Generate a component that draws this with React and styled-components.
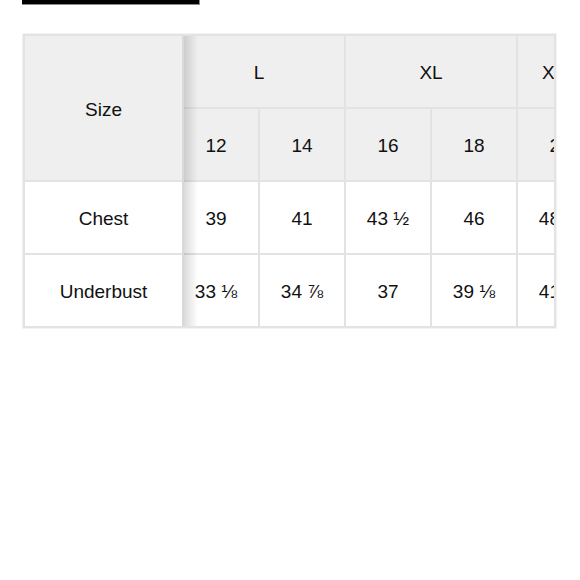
import React from 'react';
import styled, { createGlobalStyle } from 'styled-components';

const GlobalStyle = createGlobalStyle`
  body {
    margin: 0;
    background: #fff;
    font-family: "Liberation Sans", Arial, sans-serif;
  }
`;

const Page = styled.div`
  width: 580px;
  height: 580px;
  padding-left: 22px;
  box-sizing: border-box;
`;

const BlackBar = styled.div`
  width: 177px;
  height: 4px;
  background: #000;
  border-right: 1px solid #8a8a8a;
  border-bottom: 1px solid #8a8a8a;
`;

const Table = styled.div`
  margin-top: 28px;
  width: 535px;
  box-sizing: border-box;
  display: flex;
  border: 1px solid #f3f3f3;
  padding: 2px;
  background: #e3e3e3;
  overflow: hidden;
`;

const StickyCol = styled.div`
  flex: 0 0 157px;
  display: grid;
  grid-template-rows: 144px 71px 71px;
  row-gap: 2px;
  border-right: 2px solid #d9d9d9;
`;

const Scroller = styled.div`
  position: relative;
  flex: 1;
  overflow: hidden;

  &::before {
    content: '';
    position: absolute;
    left: 0;
    top: 0;
    bottom: 0;
    width: 14px;
    background: linear-gradient(to right, rgba(0, 0, 0, 0.14), rgba(0, 0, 0, 0));
    z-index: 1;
  }
`;

const Grid = styled.div`
  display: grid;
  grid-template-columns: repeat(6, 84px);
  grid-template-rows: repeat(4, 71px);
  gap: 2px;
  margin-left: -10px;
  width: max-content;
`;

const Cell = styled.div`
  display: flex;
  align-items: center;
  justify-content: center;
  padding-top: 3px;
  box-sizing: border-box;
  background: ${(p) => (p.$head ? '#efefef' : '#fff')};
  color: #111;
  font-size: 19px;
  white-space: nowrap;
  grid-column: ${(p) => (p.$span ? `span ${p.$span}` : 'auto')};
`;

const groups = [
  { label: 'L', span: 2 },
  { label: 'XL', span: 2 },
  { label: 'XXL', span: 1 },
  { label: '1X', span: 1 },
];
const sizes = ['12', '14', '16', '18', '20', '22'];
const rows = [
  { label: 'Chest', values: ['39', '41', '43 ½', '46', '48 ½', '51'] },
  { label: 'Underbust', values: ['33 ⅛', '34 ⅞', '37', '39 ⅛', '41 ⅜', '43 ⅝'] },
];

const App = () => (
  <Page>
    <GlobalStyle />
    <BlackBar />
    <Table>
      <StickyCol>
        <Cell $head>Size</Cell>
        {rows.map((r) => (
          <Cell key={r.label}>{r.label}</Cell>
        ))}
      </StickyCol>
      <Scroller>
        <Grid>
          {groups.map((g) => (
            <Cell $head $span={g.span} key={g.label}>{g.label}</Cell>
          ))}
          {sizes.map((s) => (
            <Cell $head key={s}>{s}</Cell>
          ))}
          {rows.map((r) => r.values.map((v, i) => (
            <Cell key={r.label + i}>{v}</Cell>
          )))}
        </Grid>
      </Scroller>
    </Table>
  </Page>
);

export default App;
